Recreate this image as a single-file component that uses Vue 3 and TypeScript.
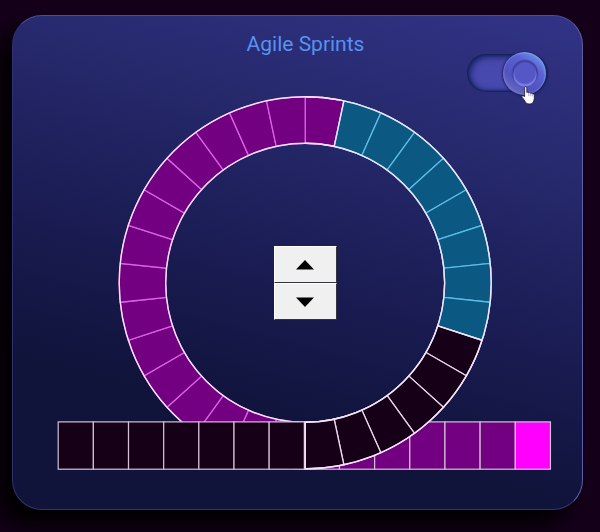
<script setup lang="ts">
import { computed, ref } from 'vue'

type Tone = 'done' | 'active' | 'idle'

interface Segment {
  key: number
  d: string
  tone: Tone
}

const CX = 248.2
const CY = 186.8
const OUTER = 186
const INNER = 139.5
const SLICES = 30
const LOOP_START = 9
const CELL = 35.16
const CELLS = 7

const enabled = ref(true)
const length = ref(8)

function point(radius: number, slice: number): string {
  const angle = (slice * 2 * Math.PI) / SLICES
  const x = CX + radius * Math.sin(angle)
  const y = CY - radius * Math.cos(angle)
  return `${x.toFixed(2)} ${y.toFixed(2)}`
}

function slicePath(i: number): string {
  return (
    `M${point(OUTER, i)}A${OUTER} ${OUTER} 0 0 1 ${point(OUTER, i + 1)}` +
    `L${point(INNER, i + 1)}A${INNER} ${INNER} 0 0 0 ${point(INNER, i)}Z`
  )
}

function toneOf(i: number): Tone {
  if (i >= LOOP_START && i < 15) return 'idle'
  if (i < LOOP_START && i >= LOOP_START - length.value) return 'active'
  return 'done'
}

const segments = computed<Segment[]>(() =>
  Array.from({ length: SLICES }, (_, i) => ({ key: i, d: slicePath(i), tone: toneOf(i) })),
)
const backSegments = computed(() => segments.value.filter((s) => s.tone === 'done'))
const frontSegments = computed(() => [
  ...segments.value.filter((s) => s.tone === 'active'),
  ...segments.value.filter((s) => s.tone === 'idle'),
])
const edges = computed(() => [LOOP_START - length.value, LOOP_START, 15])

const leftCells = Array.from({ length: CELLS }, (_, i) => 1.2 + i * CELL)
const rightCells = Array.from({ length: CELLS }, (_, i) => 1.2 + (i + CELLS) * CELL)

function change(step: number): void {
  length.value = Math.min(LOOP_START, Math.max(1, length.value + step))
}
</script>

<template>
  <main class="card">
    <header class="head">
      <h1 class="title">Agile Sprints</h1>
      <div class="switch">
        <input v-model="enabled" class="switch-input" type="checkbox" role="switch" aria-label="Agile Sprints" />
        <svg class="pointer" viewBox="0 0 14 19" aria-hidden="true">
          <path
            d="M3.6 1.6c0-1.3 2.2-1.3 2.2 0v5c.4-.7 1.8-.6 2 .3.5-.6 1.7-.4 1.9.5.6-.5 1.8-.2 2 .7.6-.3 1.6 0 1.6 1v3.3c0 1.6-.9 2.4-1 3.4-.3 1.5-1.6 2.2-4 2.2-2.2 0-3.3-.8-4-2.2-.8-1.6-1.9-3-3-4.2-.9-1-.2-2.2.9-1.9.6.2 1 .6 1.4 1.1z"
            fill="#fff"
            stroke="#16163a"
            stroke-width=".8"
          />
          <path d="M7.8 7.2v3M9.8 7.7v2.6M11.7 8.4v2" stroke="#55557c" stroke-width=".5" fill="none" />
        </svg>
      </div>
    </header>

    <section class="stage">
      <svg class="chart" viewBox="0 0 497 374" role="img" aria-label="Agile Sprints">
        <path v-for="s in backSegments" :key="s.key" :d="s.d" :class="s.tone" />
        <circle class="rim" :cx="CX" :cy="CY" :r="OUTER" />
        <circle class="rim" :cx="CX" :cy="CY" :r="INNER" />

        <rect
          v-for="(x, i) in rightCells"
          :key="'r' + i"
          class="cell"
          :class="i === CELLS - 1 ? 'head-cell' : 'done-cell'"
          :x="x"
          y="325.9"
          :width="CELL"
          height="47.3"
        />
        <rect
          v-for="(x, i) in leftCells"
          :key="'l' + i"
          class="cell idle-cell"
          :x="x"
          y="325.9"
          :width="CELL"
          height="47.3"
        />

        <path v-for="s in frontSegments" :key="s.key" :d="s.d" :class="s.tone" />
        <path
          class="rim"
          :d="`M${point(OUTER, 0)}A${OUTER} ${OUTER} 0 0 1 ${point(OUTER, 15)}M${point(INNER, 0)}A${INNER} ${INNER} 0 0 1 ${point(INNER, 15)}`"
        />
        <path v-for="e in edges" :key="'e' + e" class="rim" :d="`M${point(INNER, e)}L${point(OUTER, e)}`" />
      </svg>

      <div class="stepper">
        <button type="button" class="step" aria-label="Increase" @click="change(1)">
          <svg class="arrow" viewBox="0 0 19 10" aria-hidden="true"><path d="M0 9.5 9 0l9 9.5z" /></svg>
        </button>
        <button type="button" class="step" aria-label="Decrease" @click="change(-1)">
          <svg class="arrow" viewBox="0 0 19 10" aria-hidden="true"><path d="M0 .5h18L9 10z" /></svg>
        </button>
      </div>
    </section>
  </main>
</template>

<style>
body {
  margin: 0;
  background: #15001a;
}

#app {
  display: flow-root;
  min-height: 100vh;
  overflow: hidden;
  background: #15001a;
}
</style>

<style scoped>
.card {
  box-sizing: border-box;
  margin: 15px 17px 22px 12px;
  padding: 0 28px 39px 44px;
  border: 1px solid;
  border-color: #4c4d96 #5d5fa6 #333572 #2f3072;
  border-radius: 30px;
  background: linear-gradient(195deg, #323387 0%, #272a6e 24%, #1b1d55 50%, #10133a 76%);
  box-shadow: -16px 16px 24px #000;
  font-family: Roboto, "Liberation Sans", sans-serif;
}

.head {
  display: grid;
  grid-template-columns: 1fr auto 1fr;
  align-items: start;
  height: 80px;
}

.title {
  grid-column: 2;
  margin: 0;
  padding-top: 14px;
  font-size: 21px;
  font-weight: 400;
  line-height: 28px;
  color: #5692f0;
}

.switch {
  position: relative;
  justify-self: end;
  margin: 38px 6px 0 0;
}

.switch-input {
  appearance: none;
  display: flex;
  align-items: center;
  box-sizing: border-box;
  width: 81px;
  height: 38px;
  margin: 0;
  border-radius: 19px;
  background: #4849ae;
  box-shadow:
    inset 0 0 2px 1px #08284e,
    inset 2px 2px 7px 1px #1e2068,
    inset 0 -1px 5px #292a7c;
  cursor: pointer;
}

.switch-input::before {
  content: "";
  box-sizing: border-box;
  flex: none;
  width: 43px;
  height: 43px;
  border-radius: 50%;
  background:
    radial-gradient(circle at 22px 21px, #5557c6 0 10px, transparent 12px),
    radial-gradient(circle at 22px 23px, #7b80e4 0 11px, transparent 12px),
    radial-gradient(circle at 22px 21px, #3c3e9c 0 12px, transparent 14px),
    linear-gradient(215deg, #6a9aee 6%, #5c60d2 34%, #5052be 65%, #7473c4 96%);
  box-shadow:
    inset -1px 1px 2px #7ba2ea,
    inset 1px -1px 2px #7776c6,
    1px 1px 3px #1b1c5c,
    -1px 0 2px #25266e;
}

.switch-input:checked::before {
  margin-left: 36px;
}

.pointer {
  position: absolute;
  left: 54px;
  top: 32px;
  width: 14px;
  height: 19px;
  pointer-events: none;
}

.stage {
  display: grid;
  place-items: center;
}

.chart,
.stepper {
  grid-area: 1 / 1;
}

.chart {
  display: block;
  width: 100%;
  overflow: visible;
}

.done {
  fill: #720080;
  stroke: #dc62e4;
  stroke-width: 1.3;
}

.active {
  fill: #0b5983;
  stroke: #5fbde8;
  stroke-width: 1.3;
}

.idle {
  fill: #150018;
  stroke: #eed8ef;
  stroke-width: 1.3;
}

.rim {
  fill: none;
  stroke: #f3e4fa;
  stroke-width: 1.4;
}

.cell {
  stroke: #d6c0d8;
  stroke-width: 1.2;
}

.idle-cell {
  fill: #150018;
}

.done-cell {
  fill: #720080;
}

.head-cell {
  fill: #ff00ff;
}

.stepper {
  display: grid;
  z-index: 1;
}

.step {
  display: grid;
  place-items: center;
  box-sizing: border-box;
  width: 63px;
  height: 37px;
  padding: 0;
  border: 1px solid;
  border-color: #fff #33333c #33333c #fff;
  background: #f0f0f0;
  cursor: pointer;
}

.step:active {
  background: #dcdcdc;
}

.arrow {
  display: block;
  width: 19px;
  height: 10px;
}
</style>
